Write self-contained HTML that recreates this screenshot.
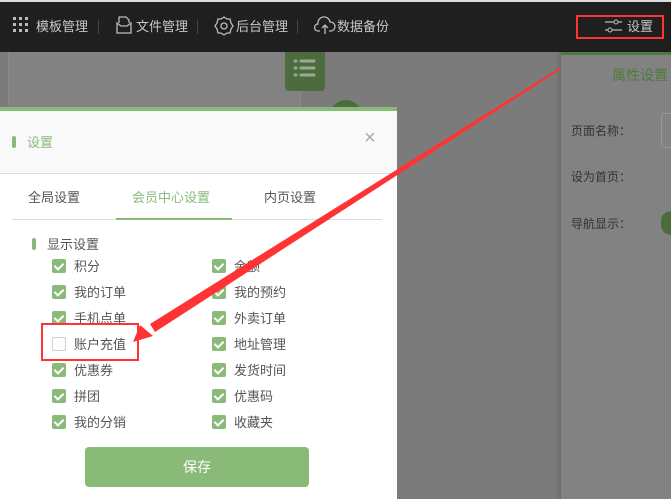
<!DOCTYPE html>
<html><head><meta charset="utf-8"><style>
*{margin:0;padding:0;box-sizing:border-box}
body{width:671px;height:499px;overflow:hidden;background:#7b7b7b;font-family:"Liberation Sans","Noto Sans CJK SC",sans-serif;position:relative;font-size:13px}
.top{position:absolute;left:0;top:0;width:671px;height:52px;background:#1f1f1f;border-top:2px solid #ddd}
.nav{position:absolute;top:14px;color:#c8c8c8;font-size:13px}
.sep{position:absolute;top:18px;width:1px;height:14px;background:#444}
.abs{position:absolute}
.cb{position:absolute;width:14px;height:14px;background:#8aba78;border-radius:2px}
.cb:after{content:"";position:absolute;left:4px;top:2px;width:4px;height:7px;border:solid #fff;border-width:0 2px 2px 0;transform:rotate(45deg)}
.lbl{position:absolute;color:#555;font-size:13px}
</style></head><body>
<div class="top">
 <svg class="abs" style="left:13px;top:15px" width="16" height="16"><g fill="#bbb"><rect x="0" y="0" width="3" height="3"/><rect x="6" y="0" width="3" height="3"/><rect x="12" y="0" width="3" height="3"/><rect x="0" y="6" width="3" height="3"/><rect x="6" y="6" width="3" height="3"/><rect x="12" y="6" width="3" height="3"/><rect x="0" y="12" width="3" height="3"/><rect x="6" y="12" width="3" height="3"/><rect x="12" y="12" width="3" height="3"/></g></svg>
 <div class="nav" style="left:36px">模板管理</div>
 <div class="sep" style="left:98px"></div>
 <svg class="abs" style="left:115px;top:13px" width="18" height="20"><path d="M2 8V18H16V8L12 11H6Z M4 8V2H11L14 5V8" fill="none" stroke="#bbb" stroke-width="1.3"/></svg>
 <div class="nav" style="left:136px">文件管理</div>
 <div class="sep" style="left:197px"></div>
 <svg class="abs" style="left:214px;top:14px" width="20" height="20"><circle cx="10" cy="10" r="3" fill="none" stroke="#bbb" stroke-width="1.3"/><path d="M10 1L13 3L16 3L17 7L19 10L17 13L16 17L13 17L10 19L7 17L4 17L3 13L1 10L3 7L4 3L7 3Z" fill="none" stroke="#bbb" stroke-width="1.3"/></svg>
 <div class="nav" style="left:236px">后台管理</div>
 <div class="sep" style="left:297px"></div>
 <svg class="abs" style="left:314px;top:14px" width="22" height="20"><path d="M6 15H4A3.5 3.5 0 0 1 4 8A6 6 0 0 1 16 6A4.5 4.5 0 0 1 17 15H15M11 18V9M8 12L11 9L14 12" fill="none" stroke="#bbb" stroke-width="1.3"/></svg>
 <div class="nav" style="left:337px">数据备份</div>
 <svg class="abs" style="left:604px;top:16px" width="20" height="16"><path d="M1 4H18M1 12H18" stroke="#bbb" stroke-width="1.3"/><circle cx="12" cy="4" r="2" fill="#1f1f1f" stroke="#bbb"/><circle cx="6" cy="12" r="2" fill="#1f1f1f" stroke="#bbb"/></svg>
 <div class="nav" style="left:627px">设置</div>
</div>
<div class="abs" style="left:576px;top:15px;width:88px;height:24px;border:2px solid #f33"></div>
<div class="abs" style="left:8px;top:52px;width:293px;height:447px;background:#828282;border-left:1px solid #8a8a8a;border-right:1px solid #8a8a8a"></div>
<div class="abs" style="left:285px;top:52px;width:40px;height:39px;background:#4c6c3e;border-radius:0 0 4px 4px"></div>
<svg class="abs" style="left:292px;top:56px" width="28" height="28"><g stroke="#9aaa90" stroke-width="3" stroke-linecap="round"><path d="M3 5H4M9 5H22M3 12H4M9 12H22M3 19H4M9 19H22"/></g></svg>
<div class="abs" style="left:330px;top:100px;width:32px;height:32px;border-radius:50%;background:#4c6c3e"></div>
<div class="abs" style="left:561px;top:52px;width:110px;height:447px;background:#828282;border-top:3px solid #4f7a3e;box-shadow:-2px 0 4px rgba(0,0,0,.15)"></div>
<div class="abs" style="left:612px;top:65px;color:#4f7a3e;font-size:14px">属性设置</div>
<div class="abs" style="left:571px;top:122px;color:#333;font-size:12px">页面名称：</div>
<div class="abs" style="left:661px;top:113px;width:20px;height:35px;border:1px solid #999;border-radius:4px"></div>
<div class="abs" style="left:571px;top:168px;color:#333;font-size:12px">设为首页：</div>
<div class="abs" style="left:571px;top:215px;color:#333;font-size:12px">导航显示：</div>
<div class="abs" style="left:661px;top:211px;width:20px;height:24px;border-radius:12px;background:#4c6c3e"></div>

<div class="abs" style="left:0;top:107px;width:397px;height:392px;background:#fff;border-top:4px solid #8aba78">
 <div class="abs" style="left:0;top:0;width:397px;height:63px;background:#f9f9f9;border-bottom:1px solid #ddd"></div>
 <div class="abs" style="left:12px;top:25px;width:4px;height:12px;border-radius:2px;background:#8aba78"></div>
 <div class="abs" style="left:27px;top:21px;color:#8aba78;font-size:13px">设置</div>
 <div class="abs" style="left:364px;top:16px;color:#aaa;font-size:20px">×</div>
 <div class="abs" style="left:28px;top:76px;color:#555;font-size:13px">全局设置</div>
 <div class="abs" style="left:132px;top:76px;color:#8aba78;font-size:13px">会员中心设置</div>
 <div class="abs" style="left:264px;top:76px;color:#555;font-size:13px">内页设置</div>
 <div class="abs" style="left:12px;top:108px;width:370px;height:1px;background:#ddd"></div>
 <div class="abs" style="left:116px;top:107px;width:116px;height:2px;background:#8aba78"></div>
 <div class="abs" style="left:32px;top:127px;width:4px;height:12px;border-radius:2px;background:#8aba78"></div>
 <div class="abs" style="left:47px;top:123px;color:#555;font-size:13px">显示设置</div>
</div>
<div class="cb" style="left:52px;top:259px"></div><div class="lbl" style="left:74px;top:256px">积分</div>
<div class="cb" style="left:52px;top:285px"></div><div class="lbl" style="left:74px;top:282px">我的订单</div>
<div class="cb" style="left:52px;top:311px"></div><div class="lbl" style="left:74px;top:308px">手机点单</div>
<div class="abs" style="left:52px;top:337px;width:14px;height:14px;border:1px solid #ccc;border-radius:2px"></div><div class="lbl" style="left:74px;top:334px">账户充值</div>
<div class="cb" style="left:52px;top:363px"></div><div class="lbl" style="left:74px;top:360px">优惠券</div>
<div class="cb" style="left:52px;top:389px"></div><div class="lbl" style="left:74px;top:386px">拼团</div>
<div class="cb" style="left:52px;top:415px"></div><div class="lbl" style="left:74px;top:412px">我的分销</div>
<div class="cb" style="left:212px;top:259px"></div><div class="lbl" style="left:234px;top:256px">余额</div>
<div class="cb" style="left:212px;top:285px"></div><div class="lbl" style="left:234px;top:282px">我的预约</div>
<div class="cb" style="left:212px;top:311px"></div><div class="lbl" style="left:234px;top:308px">外卖订单</div>
<div class="cb" style="left:212px;top:337px"></div><div class="lbl" style="left:234px;top:334px">地址管理</div>
<div class="cb" style="left:212px;top:363px"></div><div class="lbl" style="left:234px;top:360px">发货时间</div>
<div class="cb" style="left:212px;top:389px"></div><div class="lbl" style="left:234px;top:386px">优惠码</div>
<div class="cb" style="left:212px;top:415px"></div><div class="lbl" style="left:234px;top:412px">收藏夹</div>
<div class="abs" style="left:85px;top:447px;width:224px;height:40px;background:#8aba78;border-radius:4px;color:#fff;font-size:14px;text-align:center;line-height:40px">保存</div>
<div class="abs" style="left:41px;top:323px;width:98px;height:38px;border:2px solid #f33"></div>
<svg class="abs" style="left:0;top:0" width="671" height="499"><polygon points="560,67.5 561,69 155,332 150,324" fill="#f33"/><polygon points="133,342 140,325 153,336" fill="#f33"/></svg>
</body></html>
